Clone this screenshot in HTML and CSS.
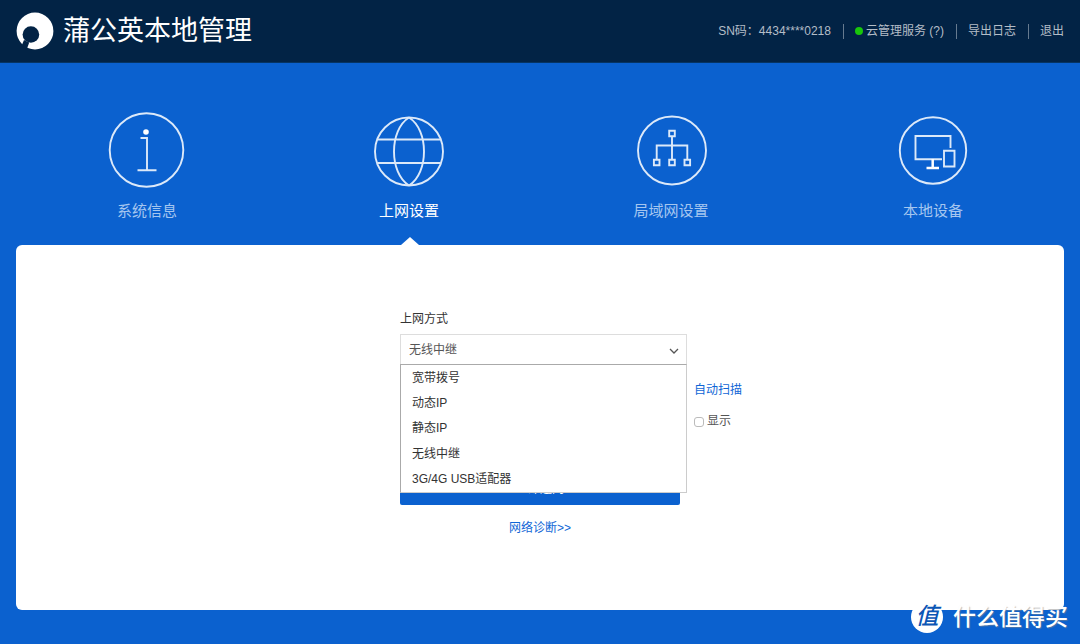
FILE: index.html
```html
<!DOCTYPE html>
<html lang="zh-CN">
<head>
<meta charset="utf-8">
<title>蒲公英本地管理</title>
<link rel="stylesheet" href="styles.css">
</head>
<body>
<header class="topbar">
  <div class="brand">
    <svg class="brand-logo" viewBox="0 0 38 38" aria-hidden="true">
      <circle fill="#fff" cx="19" cy="19" r="18.400"/>
      <circle fill="#022345" cx="14.900" cy="22.500" r="8.300"/>
      <path fill="#022345" d="M8 28l5.200 2.500-2.700 7.500-5-4z"/>
    </svg>
    <h1 class="brand-name">蒲公英本地管理</h1>
  </div>
  <ul class="tools">
    <li class="tool">SN码：4434****0218</li>
    <li class="tool"><a class="tool-link" href="#"><span class="dot"></span>云管理服务 (?)</a></li>
    <li class="tool"><a class="tool-link" href="#">导出日志</a></li>
    <li class="tool"><a class="tool-link" href="#">退出</a></li>
  </ul>
</header>
<nav class="tabs">
  <a class="tab" href="#">
    <svg class="tab-icon" viewBox="0 0 80 80" aria-hidden="true">
      <circle cx="39.500" cy="40" r="36.800"/>
      <circle class="fill" cx="39" cy="22" r="2.800"/>
      <path d="M33.500 28h6.500v32M30.500 60.200h19"/>
    </svg>
    系统信息
  </a>
  <a class="tab tab-active" href="#">
    <svg class="tab-icon" viewBox="0 0 80 80" aria-hidden="true">
      <circle cx="40" cy="41.500" r="34"/>
      <path d="M40 7.500C20 20 20 63 40 75.500M40 7.500C60 20 60 63 40 75.500M8.500 29.500h63M8.500 53h63"/>
    </svg>
    上网设置
  </a>
  <a class="tab" href="#">
    <svg class="tab-icon" viewBox="0 0 80 80" aria-hidden="true">
      <circle cx="41" cy="40.500" r="34"/>
      <path d="M38.200 20.700h5.600v5.600h-5.600zM22.900 49.700h5.600v5.600h-5.600zM38.200 49.700h5.600v5.600h-5.600zM53.500 49.700h5.600v5.600h-5.600zM41 26.500v23M25.700 49.500V35.500h30.600v14"/>
    </svg>
    局域网设置
  </a>
  <a class="tab" href="#">
    <svg class="tab-icon" viewBox="0 0 80 80" aria-hidden="true">
      <circle cx="40" cy="40.500" r="33.200"/>
      <path d="M49 49.200H22.500V26H57.500v12M51 40.800h10.500v15.700h-10.500z"/>
      <path class="stand" d="M39.700 49v9M33.500 58h12.500"/>
    </svg>
    本地设备
  </a>
</nav>
<main class="panel">
  <form class="form">
    <label class="field-label" for="mode">上网方式</label>
    <div class="select-box">
      <select class="select" id="mode">
        <option>宽带拨号</option>
        <option>动态IP</option>
        <option>静态IP</option>
        <option selected>无线中继</option>
        <option>3G/4G USB适配器</option>
      </select>
      <svg class="chevron" viewBox="0 0 10 6" aria-hidden="true"><path d="M1 1l4 4 4-4"/></svg>
      <ul class="menu">
        <li class="menu-item">宽带拨号</li>
        <li class="menu-item">动态IP</li>
        <li class="menu-item">静态IP</li>
        <li class="menu-item">无线中继</li>
        <li class="menu-item">3G/4G USB适配器</li>
      </ul>
    </div>
    <div class="side">
      <a class="link" href="#">自动扫描</a>
      <label class="check"><input class="check-box" type="checkbox">显示</label>
    </div>
    <button class="submit" type="button">立即连网</button>
    <a class="link diagnose" href="#">网络诊断&gt;&gt;</a>
  </form>
</main>
<div class="watermark"><span class="watermark-badge">值</span>什么值得买</div>
</body>
</html>
```
FILE: styles.css
```css
* {
  box-sizing: border-box;
}

body {
  margin: 0;
  min-height: 100vh;
  position: relative;
  display: flex;
  flex-direction: column;
  background: #0b61cf;
  color: #333;
  font: 12px/20px "Liberation Sans", "Noto Sans CJK SC", sans-serif;
}

ul {
  margin: 0;
  padding: 0;
  list-style: none;
}

a {
  color: inherit;
  text-decoration: none;
}

.topbar {
  display: flex;
  align-items: center;
  justify-content: space-between;
  min-height: 63px;
  padding: 0 16px;
  background: #022345;
  border-bottom: 1px solid #063463;
}

.brand {
  display: flex;
  align-items: center;
  gap: 9px;
}

.brand-logo {
  width: 38px;
  height: 38px;
}

.brand-name {
  margin: 0;
  color: #fff;
  font-size: 27px;
  font-weight: 400;
  line-height: 40px;
}

.tools {
  display: flex;
  align-items: center;
  color: #b4bdc7;
}

.tool {
  padding: 0 12px 0 11px;
  line-height: 15px;
}

.tool + .tool {
  border-left: 1px solid #667a8f;
}

.tool:last-child {
  padding-right: 0;
}

.tool-link {
  display: flex;
  align-items: center;
  gap: 3px;
}

.dot {
  width: 8px;
  height: 8px;
  border-radius: 50%;
  background: #19c60b;
}

.tabs {
  display: grid;
  grid-template-columns: repeat(4, 1fr);
  margin: 0 16px;
  padding-top: 47px;
}

.tab {
  position: relative;
  display: flex;
  flex-direction: column;
  align-items: center;
  gap: 11px;
  padding-bottom: 24px;
  color: #a5c6ef;
  font-size: 15px;
}

.tab-active {
  color: #fff;
}

.tab-active::after {
  content: "";
  position: absolute;
  bottom: 0;
  left: 50%;
  margin-left: -8px;
  border: 9px solid transparent;
  border-top: 0;
  border-bottom: 8px solid #fff;
}

.tab-icon {
  width: 80px;
  height: 80px;
  fill: none;
  stroke: #dce9f9;
  stroke-width: 1.900;
}

.tab-icon .fill {
  fill: #fff;
  stroke: none;
}

.tab-icon .stand {
  stroke: #fff;
  stroke-width: 2.500;
}

.panel {
  flex: 1;
  margin: 0 16px 34px;
  padding: 64px 0;
  border-radius: 6px;
  background: #fff;
}

.form {
  display: grid;
  grid-template-columns: 1fr 280px 1fr;
}

.field-label {
  grid-column: 2;
}

.select-box {
  position: relative;
  grid-column: 2;
  margin-top: 5px;
  margin-right: -7px;
}

.select {
  display: block;
  width: 100%;
  height: 31px;
  padding: 0 8px;
  appearance: none;
  border: 1px solid #ddd;
  border-radius: 0;
  background: #fff;
  color: #555;
  font: inherit;
}

.chevron {
  position: absolute;
  top: 14px;
  right: 8px;
  width: 10px;
  height: 6px;
  fill: none;
  stroke: #555;
  stroke-width: 1.300;
}

.menu {
  position: absolute;
  z-index: 1;
  top: 30px;
  left: 0;
  right: 0;
  display: grid;
  grid-auto-rows: 1fr;
  align-items: center;
  height: 129px;
  padding: 0 11px;
  border: 1px solid #ccc;
  border-top-color: #aaa;
  border-left-color: #aaa;
  background: #fff;
}

.side {
  grid-column: 3;
  grid-row: 3;
  display: grid;
  justify-items: start;
  gap: 11px;
  margin-top: 15px;
  padding-left: 14px;
}

.link {
  color: #0f66d6;
}

.check {
  display: flex;
  align-items: center;
  gap: 3px;
  color: #555;
}

.check-box {
  width: 10px;
  height: 10px;
  margin: 2px 0 0;
  appearance: none;
  border: 1px solid #bbb;
  border-radius: 3px;
  background: #fff;
}

.submit {
  grid-column: 2;
  grid-row: 4;
  height: 32px;
  margin-top: 42px;
  padding: 0;
  border: 0;
  border-radius: 2px;
  background: #0b61cf;
  color: #fff;
  font: inherit;
}

.diagnose {
  grid-column: 2;
  grid-row: 5;
  margin-top: 13px;
  text-align: center;
}

.watermark {
  position: absolute;
  right: 12px;
  bottom: 11px;
  display: flex;
  align-items: center;
  gap: 10px;
  color: #fff;
  font-size: 23px;
  font-weight: 500;
  line-height: 32px;
  text-shadow: 1px 1px 1px #8888;
}

.watermark-badge {
  width: 32px;
  height: 32px;
  border-radius: 50%;
  background: #fff;
  color: #0b56b5;
  font-style: italic;
  font-size: 23px;
  line-height: 31px;
  text-align: center;
  text-shadow: none;
}
```
